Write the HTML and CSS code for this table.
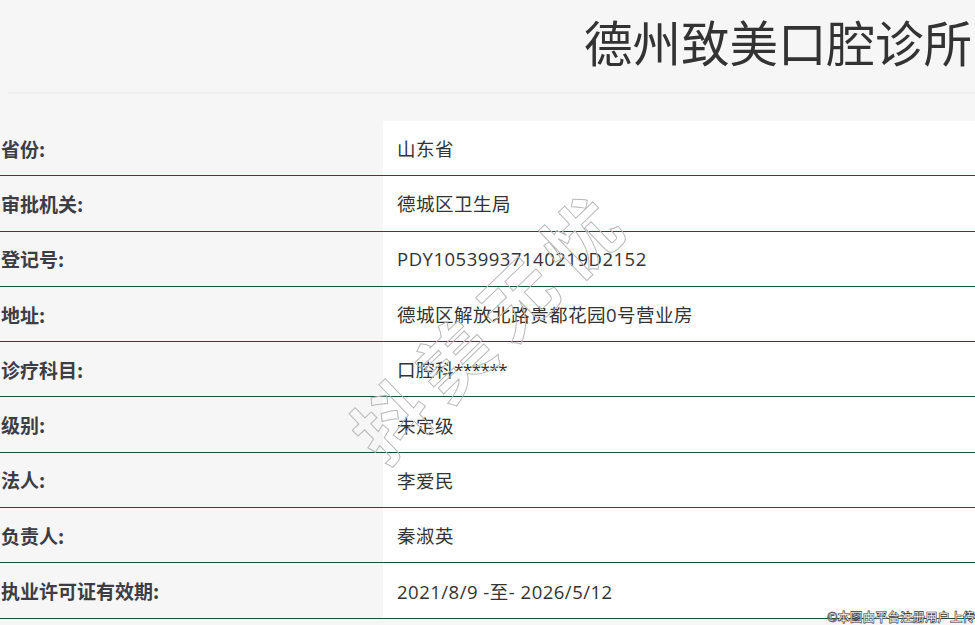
FILE: index.html
```html
<!DOCTYPE html>
<html lang="zh-CN">
<head>
<meta charset="utf-8">
<title>德州致美口腔诊所</title>
<link rel="stylesheet" href="styles.css">
</head>
<body>
<div class="page">
  <header class="head">
    <h1 class="title">德州致美口腔诊所</h1>
  </header>
  <div class="divider"></div>
  <div class="table">
    <div class="row"><div class="label">省份:</div><div class="value">山东省</div></div>
    <div class="row"><div class="label">审批机关:</div><div class="value">德城区卫生局</div></div>
    <div class="row"><div class="label">登记号:</div><div class="value">PDY10539937140219D2152</div></div>
    <div class="row"><div class="label">地址:</div><div class="value">德城区解放北路贵都花园0号营业房</div></div>
    <div class="row"><div class="label">诊疗科目:</div><div class="value">口腔科<span class="stars">******</span></div></div>
    <div class="row"><div class="label">级别:</div><div class="value">未定级</div></div>
    <div class="row"><div class="label">法人:</div><div class="value">李爱民</div></div>
    <div class="row"><div class="label">负责人:</div><div class="value">秦淑英</div></div>
    <div class="row"><div class="label">执业许可证有效期:</div><div class="value">2021/8/9 -至- 2026/5/12</div></div>
  </div>
  <div class="watermark">抖美无忧</div>
  <div class="credit">©本图由平台注册用户上传</div>
</div>
</body>
</html>
```
FILE: styles.css
```css
html, body {
  margin: 0;
  padding: 0;
}
body {
  background: #f6f6f6;
  font-family: "Noto Sans CJK SC", "Open Sans", sans-serif;
  color: #333;
  width: 975px;
  height: 625px;
  overflow: hidden;
}
.page {
  position: relative;
  width: 975px;
  height: 625px;
}
.head {
  display: flex;
  justify-content: flex-end;
  height: 92px;
}
.title {
  margin: 12px 3px 0 0;
  font-size: 48.5px;
  line-height: 58px;
  font-weight: 400;
  color: #333;
  white-space: nowrap;
}
.divider {
  margin-left: 8px;
  height: 2px;
  background: #eeeeee;
}
.table {
  margin-top: 27px;
  display: flex;
  flex-direction: column;
}
.row {
  display: grid;
  grid-template-columns: 383px 1fr;
  height: 54.3px;
  border-bottom: 1px solid #1f5039;
}
.label {
  display: flex;
  align-items: center;
  padding-left: 1px;
  font-size: 19px;
  font-weight: 700;
  color: #3d3d45;
}
.value {
  display: flex;
  align-items: center;
  padding-left: 14px;
  background: #fff;
  font-family: "Open Sans", "Noto Sans CJK SC", sans-serif;
  font-size: 18.5px;
  color: #333;
  letter-spacing: 0.5px;
  white-space: pre;
}
.stars {
  letter-spacing: -0.5px;
  font-size: 17px;
}
.watermark {
  position: absolute;
  left: 312px;
  top: 268px;
  font-size: 74px;
  font-weight: 700;
  letter-spacing: 14px;
  color: transparent;
  -webkit-text-stroke: 1px #b8b8b8;
  transform: rotate(-44deg);
  transform-origin: center;
  white-space: nowrap;
  pointer-events: none;
}
.credit {
  position: absolute;
  right: 0;
  bottom: 0;
  font-size: 12.5px;
  line-height: 16px;
  font-weight: 700;
  color: #fff;
  -webkit-text-stroke: 0.6px #333;
  white-space: nowrap;
}
```
